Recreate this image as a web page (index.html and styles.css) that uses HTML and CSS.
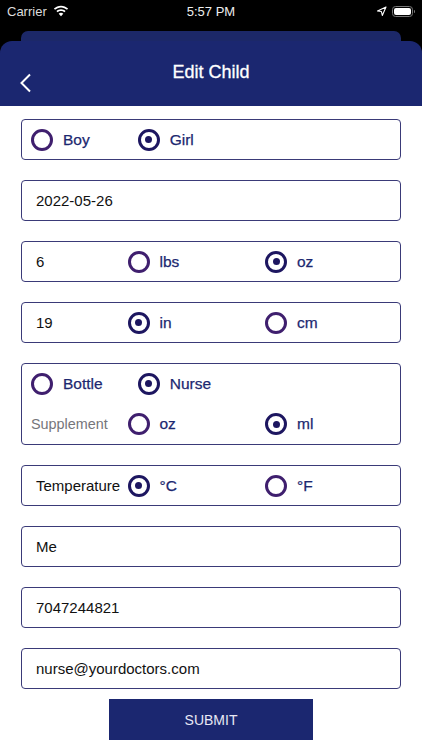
FILE: index.html
```html
<!DOCTYPE html>
<html lang="en">
<head>
<meta charset="utf-8">
<title>Edit Child</title>
<link rel="stylesheet" href="styles.css">
</head>
<body>
<div class="app">
  <div class="top">
    <div class="status">
      <div class="status-left">
        <span class="carrier">Carrier</span>
        <svg class="wifi" width="16" height="12" viewBox="0 0 16 12"><path d="M8 2.400c2.300 0 4.400.9 6 2.400l1.100-1.200C13.200 1.800 10.700.7 8 .7S2.800 1.800.9 3.600L2 4.800c1.600-1.500 3.700-2.400 6-2.400z" fill="#fff"/><path d="M8 5.900c1.300 0 2.500.5 3.400 1.400l1.200-1.200C11.400 4.900 9.800 4.200 8 4.200s-3.400.7-4.600 1.900l1.200 1.200C5.500 6.400 6.700 5.900 8 5.900z" fill="#fff"/><path d="M8 7.700c-.9 0-1.700.4-2.300 1L8 11.200l2.300-2.500c-.6-.6-1.400-1-2.300-1z" fill="#fff"/></svg>
      </div>
      <span class="time">5:57 PM</span>
      <div class="status-right">
        <svg width="11" height="11" viewBox="0 0 11 11"><path d="M10 1 1.500 5l3.900.5.9 4z" fill="none" stroke="#fff" stroke-width="1.100" stroke-linejoin="round"/></svg>
        <span class="battery"><span class="battery-fill"></span></span>
      </div>
    </div>
    <div class="back-tab"></div>
    <header class="header">
      <svg class="back" width="13" height="20" viewBox="0 0 13 20"><path d="M11 1.500 2.500 10 11 18.500" fill="none" stroke="#fff" stroke-width="2"/></svg>
      <h1 class="title">Edit Child</h1>
    </header>
  </div>
  <main class="form">
    <div class="box radios">
      <div class="opt opt-first"><span class="radio"></span><span class="label">Boy</span></div>
      <div class="opt"><span class="radio on"></span><span class="label">Girl</span></div>
    </div>
    <div class="box field">2022-05-26</div>
    <div class="box units">
      <span class="value">6</span>
      <div class="opt"><span class="radio"></span><span class="label">lbs</span></div>
      <div class="opt"><span class="radio on"></span><span class="label">oz</span></div>
    </div>
    <div class="box units">
      <span class="value">19</span>
      <div class="opt"><span class="radio on"></span><span class="label">in</span></div>
      <div class="opt"><span class="radio"></span><span class="label">cm</span></div>
    </div>
    <div class="box feed">
      <div class="radios">
        <div class="opt opt-first"><span class="radio"></span><span class="label">Bottle</span></div>
        <div class="opt"><span class="radio on"></span><span class="label">Nurse</span></div>
      </div>
      <div class="supplement">
        <span class="muted">Supplement</span>
        <div class="opt"><span class="radio"></span><span class="label">oz</span></div>
        <div class="opt"><span class="radio on"></span><span class="label">ml</span></div>
      </div>
    </div>
    <div class="box units">
      <span class="value">Temperature</span>
      <div class="opt"><span class="radio on"></span><span class="label">°C</span></div>
      <div class="opt"><span class="radio"></span><span class="label">°F</span></div>
    </div>
    <div class="box field">Me</div>
    <div class="box field">7047244821</div>
    <div class="box field">nurse@yourdoctors.com</div>
    <button class="submit" type="button">SUBMIT</button>
  </main>
</div>
</body>
</html>
```

FILE: styles.css
```css
* { box-sizing: border-box; }
html, body { margin: 0; padding: 0; }
body {
  width: 422px;
  height: 750px;
  overflow: hidden;
  background: #fff;
  font-family: "Liberation Sans", Arial, sans-serif;
}
.app { display: flex; flex-direction: column; height: 750px; }
.top { background: #000; flex: none; }

.status {
  color: #fff;
  height: 31px;
  padding: 0 7px 9px 7px;
  display: grid;
  grid-template-columns: 1fr auto 1fr;
  align-items: center;
}
.status-left { display: flex; align-items: center; gap: 6px; }
.carrier { color: #ddd; font-size: 13px; }
.time { font-size: 13px; color: #eee; }
.status-right { display: flex; justify-content: flex-end; align-items: center; gap: 5px; }
.battery {
  width: 21px;
  height: 11px;
  border: 1px solid #777;
  border-radius: 3.5px;
  padding: 1px;
  display: block;
  position: relative;
  margin-right: 2px;
}
.battery::after {
  content: "";
  position: absolute;
  right: -3px;
  top: 3px;
  width: 1.500px;
  height: 3px;
  background: #777;
  border-radius: 0 1px 1px 0;
}
.battery-fill { display: block; height: 100%; background: #fff; border-radius: 2px; }

.back-tab {
  height: 10px;
  margin: 0 21px;
  background: #1c2868;
  border-radius: 7px 7px 0 0;
}
.header {
  height: 65px;
  background: #1b2770;
  border-radius: 12px 12px 0 0;
  position: relative;
  display: flex;
  justify-content: center;
  padding-top: 21px;
  color: #fff;
}
.title {
  margin: 0;
  font-size: 18px;
  font-weight: 400;
  line-height: 20px;
  -webkit-text-stroke: 0.3px #fff;
}
.back { position: absolute; left: 19px; top: 32px; }

.form {
  flex: 1;
  padding: 13px 21px 0;
  display: flex;
  flex-direction: column;
  gap: 20px;
}
.box {
  height: 41px;
  flex: none;
  border: 1px solid #3a3a78;
  border-radius: 4px;
  display: flex;
  align-items: center;
  font-size: 15px;
  color: #111;
}
.field { padding-left: 14px; }
.radios { display: flex; align-items: center; padding-left: 9px; }
.units {
  display: grid;
  grid-template-columns: 91.500px 137.500px 1fr;
  padding-left: 14px;
}
.feed {
  height: 82px;
  padding: 0 0 0 9px;
  display: flex;
  flex-direction: column;
  align-items: stretch;
  justify-content: flex-start;
}
.feed .radios { padding: 0; height: 40px; }
.supplement {
  display: grid;
  grid-template-columns: 96.500px 137.500px 1fr;
  align-items: center;
  height: 41px;
  padding-top: 1px;
}
.muted { color: #75757a; font-size: 14.400px; }
.opt { display: flex; align-items: center; gap: 10px; }
.opt-first { width: 106.700px; }
.radio {
  width: 22px;
  height: 22px;
  border: 3px solid #3f1f6e;
  border-radius: 50%;
  flex: none;
  position: relative;
  background: #fff;
}
.radio.on { border-color: #1d1660; }
.radio.on::after {
  content: "";
  position: absolute;
  left: 4.500px;
  top: 4.500px;
  width: 7px;
  height: 7px;
  border-radius: 50%;
  background: #1d1660;
}
.label { color: #1c2870; font-size: 15.500px; -webkit-text-stroke: 0.25px #1c2870; }
.submit {
  display: block;
  width: 204px;
  height: 41px;
  flex: none;
  margin: -10px auto 0;
  background: #1b2770;
  border: 0;
  border-radius: 0;
  color: #e8e8f4;
  font-family: inherit;
  font-size: 14px;
  padding: 0;
}
```
